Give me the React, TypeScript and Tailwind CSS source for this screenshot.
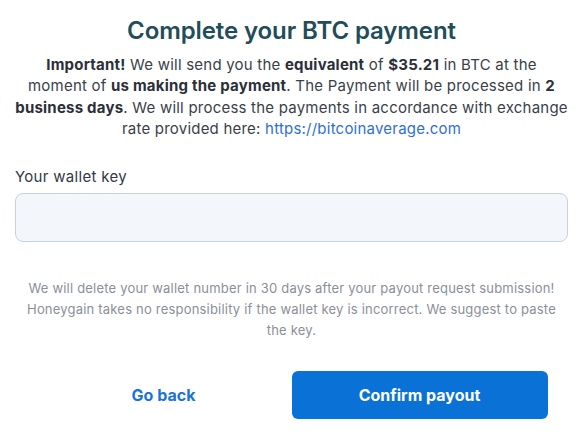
import React from "react";

export default function App() {
  const B = "font-bold text-[#2b2f38]";
  return (
    <div
      className="w-[583px] h-[437px] bg-white px-[15px] text-center"
      style={{ fontFamily: "Inter, 'Noto Sans', sans-serif" }}
    >
      <h1 className="pt-[13px] text-[24px] leading-[36px] font-semibold text-[#1f4d5a] tracking-[-0.1px]">
        Complete your BTC payment
      </h1>
      <p className="mt-[5px] text-[15px] leading-[21.3px] text-[#3a3f49] tracking-[0.22px] whitespace-nowrap">
        <b className={B}>Important!</b> We will send you the <b className={B}>equivalent</b> of{" "}
        <b className={B}>$35.21</b> in BTC at the
        <br />
        moment of <b className={B}>us making the payment</b>. The Payment will be processed in{" "}
        <b className={B}>2</b>
        <br />
        <b className={B}>business days</b>. We will process the payments in accordance with exchange
        <br />
        rate provided here: <a className="text-[#2d6fd8]">https://bitcoinaverage.com</a>
      </p>
      <div className="mt-[28px] text-left">
        <label className="block text-[15px] leading-[20px] text-[#323844] tracking-[0.3px]">
          Your wallet key
        </label>
        <input
          className="mt-[6px] block w-full h-[49px] rounded-[8px] border border-[#c8d2df] bg-[#f3f6fa] outline-none px-3"
          type="text"
        />
      </div>
      <p className="mt-[36px] text-[13px] leading-[21px] text-[#8a8f98] tracking-[0.2px] whitespace-nowrap">
        We will delete your wallet number in 30 days after your payout request submission!
        <br />
        Honeygain takes no responsibility if the wallet key is incorrect. We suggest to paste
        <br />
        the key.
      </p>
      <div className="mt-[30px] flex justify-center">
        <button className="w-[256px] h-[48px] text-[16px] font-bold text-[#1a73d9]">Go back</button>
        <button className="w-[256px] h-[48px] rounded-[6px] bg-[#0a72d6] text-[16px] font-bold text-white">
          Confirm payout
        </button>
      </div>
    </div>
  );
}
